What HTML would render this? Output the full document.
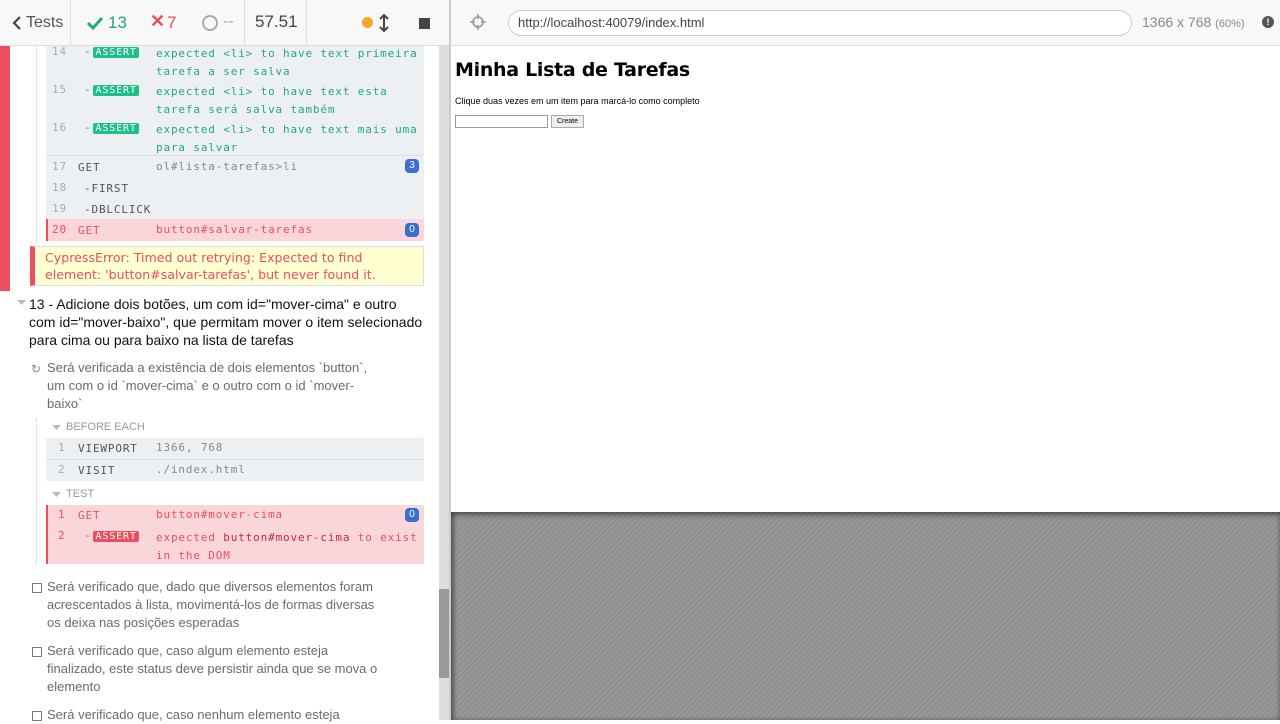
<!DOCTYPE html>
<html><head><meta charset="utf-8"><style>
*{margin:0;padding:0;box-sizing:border-box}
body{width:1280px;height:720px;overflow:hidden;background:#fff;font-family:"Liberation Sans",sans-serif;position:relative}
.a{position:absolute;white-space:nowrap}
.m{font-family:"DejaVu Sans Mono","Liberation Mono",monospace;font-size:11px;letter-spacing:0.85px}
.row{position:absolute;left:46px;width:378px;background:#edf0f3}
.num{color:#aab;}
.g{color:#1fa97f}
.badge{background:#1fbf8a;color:#fff;padding:0 2px;border-radius:2px;font-size:10px;margin-left:2px}
.rb{background:#e94f5e;color:#fff;padding:0 2px;border-radius:2px;font-size:10px;margin-left:2px}
.cnt{position:absolute;right:6px;width:14px;height:14px;border-radius:4px;background:#3a6fd1;color:#fff;font-size:10px;text-align:center;line-height:14px;letter-spacing:0}
.t{font-size:13px;color:#6b6b6b;line-height:18px}
.cb{position:absolute;width:10px;height:10px;border:1px solid #777;border-radius:1px}
</style></head><body>
<div class="a" style="left:0;top:0;width:450px;height:46px;background:#f8f8f8;border-bottom:1px solid #ddd"></div>
<div class="a" style="left:70px;top:0;width:1px;height:46px;background:#ddd"></div>
<div class="a" style="left:244px;top:0;width:1px;height:46px;background:#ddd"></div>
<div class="a" style="left:306px;top:0;width:1px;height:46px;background:#ddd"></div>
<svg class="a" style="left:12px;top:16px" width="10" height="14"><path d="M8 1 L2 7 L8 13" stroke="#444" stroke-width="2.2" fill="none"/></svg>
<div class="a" style="left:26px;top:14px;font-size:16px;color:#555">Tests</div>
<svg class="a" style="left:86px;top:15px" width="18" height="16"><path d="M2 8 L7 13 L16 3" stroke="#1fa97f" stroke-width="3" fill="none"/></svg>
<div class="a" style="left:108px;top:13px;font-size:17px;color:#1fa97f">13</div>
<div class="a" style="left:150px;top:11px;font-size:18px;color:#e94f4f;font-weight:bold">✕</div>
<div class="a" style="left:167px;top:13px;font-size:17px;color:#e94f4f">7</div>
<div class="a" style="left:202px;top:15px;width:16px;height:16px;border:2px solid #aaa;border-radius:50%"></div>
<div class="a" style="left:223px;top:13px;font-size:16px;color:#aaa">--</div>
<div class="a" style="left:255px;top:12px;font-size:17px;color:#444">57.51</div>
<div class="a" style="left:362px;top:17px;width:11px;height:11px;border-radius:50%;background:#f5a623"></div>
<svg class="a" style="left:379px;top:13px" width="10" height="20"><path d="M5 2 V18 M1 6 L5 2 L9 6 M1 14 L5 18 L9 14" stroke="#444" stroke-width="2" fill="none"/></svg>
<div class="a" style="left:419px;top:18px;width:11px;height:11px;background:#444"></div>

<div class="a" style="left:0;top:46px;width:10px;height:245px;background:#e94f5e"></div>
<div class="a" style="left:36px;top:46px;height:239px;border-left:1px dotted #ccc"></div>

<div class="row" style="top:46px;height:109px"></div>
<div class="a m num" style="left:52px;top:45px">14</div>
<div class="a m" style="left:84px;top:45px;color:#1fa97f">-<span class="badge">ASSERT</span></div>
<div class="a m g" style="left:156px;top:45px;line-height:18px">expected &lt;li&gt; to have text primeira<br>tarefa a ser salva</div>
<div class="a m num" style="left:52px;top:83px">15</div>
<div class="a m" style="left:84px;top:83px;color:#1fa97f">-<span class="badge">ASSERT</span></div>
<div class="a m g" style="left:156px;top:83px;line-height:18px">expected &lt;li&gt; to have text esta<br>tarefa será salva também</div>
<div class="a m num" style="left:52px;top:121px">16</div>
<div class="a m" style="left:84px;top:121px;color:#1fa97f">-<span class="badge">ASSERT</span></div>
<div class="a m g" style="left:156px;top:121px;line-height:18px">expected &lt;li&gt; to have text mais uma<br>para salvar</div>
<div class="row" style="top:155px;height:64px;border-top:1px solid #dde"></div>
<div class="a m num" style="left:52px;top:160px">17</div>
<div class="a m" style="left:78px;top:161px;color:#555">GET</div>
<div class="a m" style="left:156px;top:160px;color:#888">ol#lista-tarefas&gt;li</div>
<div class="cnt a" style="left:405px;top:159px">3</div>
<div class="a m num" style="left:52px;top:181px">18</div>
<div class="a m" style="left:84px;top:182px;color:#555">-FIRST</div>
<div class="a m num" style="left:52px;top:202px">19</div>
<div class="a m" style="left:84px;top:203px;color:#555">-DBLCLICK</div>
<div class="row" style="top:219px;height:22px;background:#fad6da;border-left:2px solid #e94f5e"></div>
<div class="a m" style="left:52px;top:223px;color:#e94f5e">20</div>
<div class="a m" style="left:78px;top:224px;color:#e94f5e">GET</div>
<div class="a m" style="left:156px;top:223px;color:#e94f5e">button#salvar-tarefas</div>
<div class="cnt a" style="left:405px;top:223px">0</div>

<div class="a" style="left:30px;top:246px;width:394px;height:40px;background:#ffffd2;border:1px solid #ddd;border-left:5px solid #e94f5e"></div>
<div class="a" style="left:45px;top:249px;font-size:12.6px;line-height:17px;color:#e94f5e;font-family:'DejaVu Sans',sans-serif">CypressError: Timed out retrying: Expected to find<br>element: 'button#salvar-tarefas', but never found it.</div>

<svg class="a" style="left:17px;top:300px" width="9" height="6"><path d="M0 0 H9 L4.5 5Z" fill="#bbb"/></svg>
<div class="a" style="left:29px;top:295px;font-size:14px;line-height:18px;color:#111">13 - Adicione dois botões, um com id="mover-cima" e outro<br>com id="mover-baixo", que permitam mover o item selecionado<br>para cima ou para baixo na lista de tarefas</div>

<div class="a" style="left:31px;top:362px;font-size:12px;color:#888">↻</div>
<div class="a t" style="left:47px;top:359px">Será verificada a existência de dois elementos `button`,<br>um com o id `mover-cima` e o outro com o id `mover-<br>baixo`</div>
<div class="a" style="left:36px;top:418px;height:147px;border-left:1px dotted #ccc"></div>
<svg class="a" style="left:52px;top:425px" width="9" height="6"><path d="M0 0 H9 L4.5 5Z" fill="#bbb"/></svg>
<div class="a" style="left:66px;top:421px;font-size:11px;color:#999">BEFORE EACH</div>
<div class="row" style="top:438px;height:43px"></div>
<div class="a" style="left:46px;top:459px;width:378px;height:1px;background:#dde"></div>
<div class="a m num" style="left:58px;top:441px">1</div>
<div class="a m" style="left:78px;top:442px;color:#555">VIEWPORT</div>
<div class="a m" style="left:156px;top:441px;color:#888">1366, 768</div>
<div class="a m num" style="left:58px;top:463px">2</div>
<div class="a m" style="left:78px;top:464px;color:#555">VISIT</div>
<div class="a m" style="left:156px;top:463px;color:#888">./index.html</div>
<svg class="a" style="left:52px;top:492px" width="9" height="6"><path d="M0 0 H9 L4.5 5Z" fill="#bbb"/></svg>
<div class="a" style="left:66px;top:488px;font-size:11px;color:#999">TEST</div>
<div class="row" style="top:505px;height:59px;background:#fad6da;border-left:2px solid #e94f5e"></div>
<div class="a m" style="left:58px;top:508px;color:#e94f5e">1</div>
<div class="a m" style="left:78px;top:509px;color:#e94f5e">GET</div>
<div class="a m" style="left:156px;top:508px;color:#e94f5e">button#mover-cima</div>
<div class="cnt a" style="left:405px;top:508px">0</div>
<div class="a m" style="left:58px;top:529px;color:#e94f5e">2</div>
<div class="a m" style="left:84px;top:529px;color:#e94f5e">-<span class="rb">ASSERT</span></div>
<div class="a m" style="left:156px;top:529px;line-height:18px;color:#e94f5e">expected <span style="color:#c8283a">button#mover-cima</span> to exist<br>in the DOM</div>

<div class="cb" style="left:32px;top:583px"></div>
<div class="a t" style="left:47px;top:578px">Será verificado que, dado que diversos elementos foram<br>acrescentados à lista, movimentá-los de formas diversas<br>os deixa nas posições esperadas</div>
<div class="cb" style="left:32px;top:647px"></div>
<div class="a t" style="left:47px;top:642px">Será verificado que, caso algum elemento esteja<br>finalizado, este status deve persistir ainda que se mova o<br>elemento</div>
<div class="cb" style="left:32px;top:711px"></div>
<div class="a t" style="left:47px;top:706px">Será verificado que, caso nenhum elemento esteja</div>

<div class="a" style="left:439px;top:46px;width:10px;height:674px;background:#ddd"></div>
<div class="a" style="left:439px;top:589px;width:10px;height:89px;background:#999"></div>
<div class="a" style="left:449px;top:0;width:2px;height:720px;background:#ccc"></div>

<div class="a" style="left:451px;top:0;width:829px;height:46px;background:#f8f8f8;border-bottom:1px solid #ddd"></div>
<svg class="a" style="left:470px;top:14px" width="16" height="16"><circle cx="8" cy="8" r="5" stroke="#999" stroke-width="1.6" fill="none"/><path d="M8 0V5M8 11V16M0 8H5M11 8H16" stroke="#999" stroke-width="1.6"/></svg>
<div class="a" style="left:508px;top:10px;width:624px;height:26px;border:1px solid #ccc;border-radius:13px;background:#fff"></div>
<div class="a" style="left:518px;top:15px;font-size:13px;color:#444">http://localhost:40079/index.html</div>
<div class="a" style="left:1142px;top:14px;font-size:14px;color:#888">1366 x 768 <span style="font-size:11px">(60%)</span></div>
<div class="a" style="left:1262px;top:16px;width:12px;height:12px;border-radius:50%;background:#555;color:#fff;font-size:9px;text-align:center;line-height:12px;font-weight:bold">!</div>

<div class="a" style="left:455px;top:59px;font-size:19px;font-weight:bold;color:#000;font-family:'DejaVu Sans',sans-serif;letter-spacing:-0.3px">Minha Lista de Tarefas</div>
<div class="a" style="left:455px;top:96px;font-size:9px;color:#000">Clique duas vezes em um item para marcá-lo como completo</div>
<div class="a" style="left:455px;top:115px;width:93px;height:13px;border:1px solid #999;background:#fff"></div>
<div class="a" style="left:551px;top:115px;width:33px;height:13px;border:1px solid #aaa;background:#eee;font-size:7px;text-align:center;line-height:11px">Create</div>

<div class="a" style="left:451px;top:512px;width:829px;height:208px;background:repeating-linear-gradient(-45deg,#999 0 2px,#8f8f8f 2px 4px);box-shadow:inset 0 3px 6px rgba(0,0,0,.4), inset 3px 0 4px rgba(0,0,0,.3)"></div>
</body></html>
